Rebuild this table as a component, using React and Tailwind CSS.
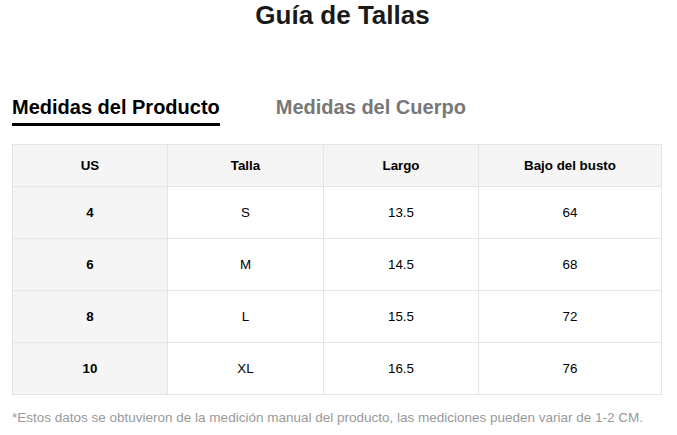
import React, { useState } from "react";

const rows = [
  { us: "4", talla: "S", largo: "13.5", busto: "64" },
  { us: "6", talla: "M", largo: "14.5", busto: "68" },
  { us: "8", talla: "L", largo: "15.5", busto: "72" },
  { us: "10", talla: "XL", largo: "16.5", busto: "76" },
];

const App = () => {
  const [tab, setTab] = useState("producto");

  return (
    <div className="w-[677px] h-[435px] bg-white px-3 font-['Liberation_Sans',Arial,sans-serif] text-black">
      <h1 className="text-center pl-2 text-[26px] leading-[30px] font-bold text-[#1a1a1a]">
        Guía de Tallas
      </h1>

      <div className="flex gap-[56px] mt-[66px]">
        <button
          onClick={() => setTab("producto")}
          className={`text-[20px] leading-[23px] font-bold pb-[4px] border-b-[3px] ${
            tab === "producto" ? "border-black text-black" : "border-transparent text-[#777]"
          }`}
        >
          Medidas del Producto
        </button>
        <button
          onClick={() => setTab("cuerpo")}
          className={`text-[20px] leading-[23px] font-bold pb-[4px] border-b-[3px] ${
            tab === "cuerpo" ? "border-black text-black" : "border-transparent text-[#777]"
          }`}
        >
          Medidas del Cuerpo
        </button>
      </div>

      <table className="mt-[18px] w-[650px] border-collapse text-[13.33px] text-center">
        <colgroup>
          <col className="w-[155px]" />
          <col className="w-[156px]" />
          <col className="w-[155px]" />
          <col />
        </colgroup>
        <thead>
          <tr className="h-[42px] bg-[#f5f5f5] font-bold">
            <th className="border border-[#e5e5e5]">US</th>
            <th className="border border-[#e5e5e5]">Talla</th>
            <th className="border border-[#e5e5e5]">Largo</th>
            <th className="border border-[#e5e5e5]">Bajo del busto</th>
          </tr>
        </thead>
        <tbody>
          {rows.map((r) => (
            <tr key={r.us} className="h-[52px]">
              <td className="border border-[#e5e5e5] bg-[#f5f5f5] font-bold">{r.us}</td>
              <td className="border border-[#e5e5e5]">{r.talla}</td>
              <td className="border border-[#e5e5e5]">{r.largo}</td>
              <td className="border border-[#e5e5e5]">{r.busto}</td>
            </tr>
          ))}
        </tbody>
      </table>

      <p className="mt-[15px] text-[13.5px] leading-[16px] text-[#999] whitespace-nowrap">
        *Estos datos se obtuvieron de la medición manual del producto, las mediciones pueden variar de 1-2 CM.
      </p>
    </div>
  );
};

export default App;
